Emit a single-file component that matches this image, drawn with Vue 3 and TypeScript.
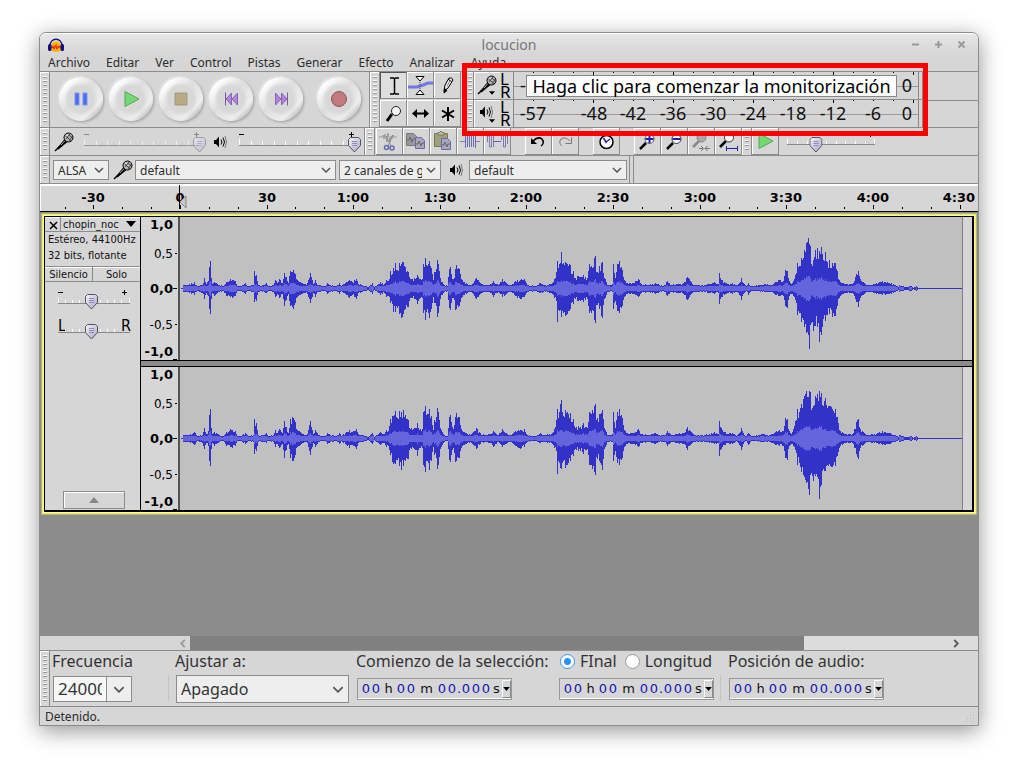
<script setup lang="ts">
import { ref } from 'vue'

const menus = ['Archivo', 'Editar', 'Ver', 'Control', 'Pistas', 'Generar', 'Efecto', 'Analizar', 'Ayuda']

const transport = [
  { id: 'pause', label: 'Pausa' },
  { id: 'play', label: 'Reproducir' },
  { id: 'stop', label: 'Detener' },
  { id: 'start', label: 'Ir al inicio' },
  { id: 'end', label: 'Ir al final' },
  { id: 'record', label: 'Grabar' },
]

const tools = [
  { id: 'ibeam', label: 'Selección' },
  { id: 'envelope', label: 'Envolvente' },
  { id: 'pencil', label: 'Dibujo' },
  { id: 'lens', label: 'Ampliación' },
  { id: 'shift', label: 'Traslado' },
  { id: 'multi', label: 'Multiherramienta' },
]

const editGroups = [
  [
    { id: 'cut', label: 'Cortar' },
    { id: 'copy', label: 'Copiar' },
    { id: 'paste', label: 'Pegar' },
    { id: 'trim', label: 'Recortar' },
    { id: 'silence', label: 'Silenciar' },
  ],
  [
    { id: 'undo', label: 'Deshacer' },
    { id: 'redo', label: 'Rehacer' },
  ],
  [{ id: 'clock', label: 'Sincronizar pistas' }],
  [
    { id: 'zoomin', label: 'Ampliar' },
    { id: 'zoomout', label: 'Reducir' },
    { id: 'fitsel', label: 'Ajustar selección' },
    { id: 'fitproj', label: 'Ajustar proyecto' },
  ],
]

const meters = [
  {
    id: 'mic',
    label: 'Medidor de grabación',
    marks: [
      { t: '-', x: 9 },
      { t: '0', x: 393 },
    ],
  },
  {
    id: 'speaker',
    label: 'Medidor de reproducción',
    marks: [
      { t: '-57', x: 19 },
      { t: '-48', x: 80 },
      { t: '-42', x: 119 },
      { t: '-36', x: 159 },
      { t: '-30', x: 199 },
      { t: '-24', x: 239 },
      { t: '-18', x: 279 },
      { t: '-12', x: 319 },
      { t: '-6', x: 359 },
      { t: '0', x: 393 },
    ],
  },
]
const meterTicks = Array.from({ length: 20 }, (_, k) => 399 - 20 * k)

const timeLabels = ['-30', '0', '30', '1:00', '1:30', '2:00', '2:30', '3:00', '3:30', '4:00', '4:30']
const timeX = (i: number) => Math.round(53.4 + 86.6 * i)
const timeTicks = Array.from({ length: 32 }, (_, k) => ({
  x: Math.round(53.4 + 28.87 * (k - 1)),
  major: (k - 1) % 3 === 0,
}))

const ampLabels = [
  { t: '1,0', y: 12, bold: true },
  { t: '0,5', y: 41, bold: false },
  { t: '0,0', y: 76, bold: true },
  { t: '-0,5', y: 112, bold: false },
  { t: '-1,0', y: 139, bold: true },
]

const recVolume = ref(100)
const playVolume = ref(100)
const speed = ref(34)
const gain = ref(45)
const pan = ref(45)
const range = ref('final')
const rate = ref('24000')

type Cell = { c: string; k: string }
const timeCells: Cell[] = [...'00h00m00.000s'].map((c) => ({
  c,
  k: c === '0' ? 'd' : c === '.' ? 'dot' : c,
}))

// Envelope points: column, peak above the axis, peak below the axis.
type Point = [number, number, number]
const left: Point[] = [
  [2, 0, 0], [3, 3, 3], [8, 3, 3], [14, 6, 6], [17, 2, 2], [22, 3, 4], [24, 10, 10], [26, 4, 4], [28, 7, 7], [29, 21, 20],
  [30, 27, 25], [31, 10, 10], [32, 4, 4], [34, 6, 7], [37, 4, 4], [43, 2, 2], [46, 6, 7], [50, 9, 8], [52, 8, 9], [55, 7, 7],
  [57, 2, 2], [62, 3, 3], [65, 5, 5], [68, 2, 2], [73, 3, 3], [74, 17, 13], [76, 13, 12], [78, 3, 3], [82, 3, 3], [86, 5, 4],
  [88, 2, 2], [93, 3, 3], [95, 8, 8], [97, 5, 5], [99, 9, 9], [102, 5, 5], [104, 15, 17], [106, 11, 11], [108, 5, 5],
  [110, 17, 17], [113, 18, 20], [115, 14, 14], [117, 8, 8], [120, 6, 6], [126, 3, 3], [128, 8, 8], [130, 15, 14], [133, 4, 4],
  [135, 8, 8], [138, 3, 3], [145, 2, 2], [147, 5, 5], [150, 3, 3], [156, 2, 2], [159, 5, 5], [161, 2, 2], [166, 6, 6],
  [169, 8, 9], [172, 6, 6], [176, 9, 10], [178, 4, 4], [182, 3, 3], [188, 1, 1], [192, 5, 5], [194, 1, 1], [200, 6, 6],
  [204, 4, 4], [206, 8, 8], [208, 7, 7], [210, 17, 14], [213, 20, 23], [215, 25, 23], [217, 18, 19], [219, 25, 25],
  [221, 24, 29], [223, 26, 25], [225, 21, 20], [228, 16, 18], [230, 9, 9], [234, 10, 10], [237, 13, 15], [240, 9, 9],
  [242, 9, 9], [243, 24, 24], [245, 30, 31], [247, 22, 20], [249, 27, 29], [251, 20, 20], [253, 8, 8], [254, 16, 14],
  [256, 19, 17], [257, 28, 28], [258, 24, 24], [260, 10, 10], [263, 4, 4], [267, 2, 2], [269, 19, 19], [270, 21, 21],
  [271, 14, 14], [273, 9, 9], [275, 19, 21], [276, 23, 20], [279, 19, 17], [281, 9, 9], [284, 6, 6], [290, 3, 3],
  [296, 10, 10], [300, 5, 5], [304, 3, 3], [311, 4, 4], [313, 7, 8], [318, 3, 3], [322, 9, 8], [326, 5, 5], [330, 3, 3],
  [335, 7, 7], [340, 8, 10], [344, 9, 8], [347, 3, 3], [355, 2, 2], [360, 5, 4], [365, 3, 3], [372, 5, 5], [374, 9, 9],
  [376, 16, 12], [377, 27, 33], [379, 24, 22], [381, 36, 28], [382, 24, 22], [385, 26, 27], [388, 22, 22], [390, 23, 20],
  [392, 14, 14], [394, 17, 15], [396, 10, 10], [399, 12, 12], [401, 11, 12], [404, 13, 13], [408, 10, 10], [410, 24, 24],
  [412, 22, 24], [415, 30, 31], [416, 32, 34], [417, 16, 16], [420, 22, 20], [423, 26, 29], [425, 10, 10], [429, 3, 3],
  [433, 4, 3], [434, 24, 20], [436, 10, 12], [438, 24, 22], [440, 27, 24], [443, 18, 17], [445, 8, 8], [448, 5, 5],
  [454, 5, 5], [459, 9, 8], [462, 4, 4], [469, 3, 3], [476, 5, 5], [480, 3, 3], [485, 3, 3], [488, 7, 7], [492, 3, 3],
  [497, 4, 4], [504, 5, 5], [508, 11, 11], [511, 7, 6], [515, 3, 3], [525, 3, 3], [535, 6, 5], [539, 4, 4], [540, 15, 15],
  [543, 8, 8], [548, 4, 4], [553, 5, 5], [558, 3, 3], [562, 10, 11], [564, 5, 5], [567, 2, 2], [569, 5, 6], [572, 2, 2],
  [585, 4, 3], [590, 3, 3], [596, 6, 6], [600, 8, 7], [604, 7, 7], [606, 18, 17], [608, 17, 19], [610, 7, 7], [612, 4, 5],
  [616, 13, 11], [618, 25, 26], [620, 22, 24], [622, 30, 33], [625, 38, 38], [627, 45, 44], [629, 50, 46], [630, 44, 60],
  [631, 42, 36], [632, 24, 34], [634, 28, 42], [636, 38, 37], [638, 40, 38], [640, 37, 53], [642, 41, 46], [644, 28, 30],
  [646, 36, 32], [648, 26, 26], [650, 28, 25], [653, 25, 28], [656, 25, 27], [658, 17, 17], [660, 8, 9], [664, 5, 5],
  [670, 4, 4], [674, 5, 5], [677, 14, 13], [679, 17, 18], [681, 9, 9], [684, 6, 6], [688, 3, 3], [695, 4, 4], [703, 7, 6],
  [710, 5, 5], [716, 3, 3], [719, 1, 1], [720, 3, 3], [726, 1, 1], [732, 2, 2], [734, 0, 0], [737, 2, 2], [739, 0, 0],
]
const right: Point[] = left.map(([x, u, d]) =>
  x === 629 ? [x, 41, 50] : x === 640 ? [x, 47, 60] : x > 614 && x < 659 ? [x, Math.min(47, u + 4), Math.min(56, d)] : [x, u + (u > 12 ? 2 : 0), d + (d > 12 ? 2 : 0)],
)

function columns(points: Point[], seed: number) {
  let s = seed
  let outer = ''
  let inner = ''
  let i = 0
  for (let x = 2; x < 740; x++) {
    while (i < points.length - 2 && points[i + 1][0] <= x) i++
    const [x0, u0, d0] = points[i]
    const [x1, u1, d1] = points[i + 1]
    const t = Math.min(1, Math.max(0, (x - x0) / (x1 - x0)))
    s = (s * 1103515245 + 12345) % 2147483648
    const j = x === x0 ? 1 : 0.72 + 0.34 * (s / 2147483648)
    const u = Math.round((u0 + (u1 - u0) * t) * j)
    const d = Math.round((d0 + (d1 - d0) * t) * j)
    outer += `M${x} ${71 - u}h1V${72 + d}h-1z`
    const m = Math.min(u, d)
    if (m >= 2) {
      const r = Math.round(1 + m * 0.24)
      inner += `M${x} ${71 - r}h1V${72 + r}h-1z`
    }
  }
  return { outer, inner }
}
const channels = [columns(left, 7), columns(right, 91)]
</script>

<template>
  <div class="page">
    <svg class="defs" aria-hidden="true">
      <defs>
        <linearGradient id="thumb" x1="0" x2="1" y1="0" y2="1">
          <stop offset="0" stop-color="#f4f4fc" />
          <stop offset="1" stop-color="#a4a4cc" />
        </linearGradient>
        <symbol id="i-pause" viewBox="0 0 20 20">
          <path d="M4 4h4v12H4zM12 4h4v12h-4z" fill="#4a6cf0" stroke="#7f95ee" />
        </symbol>
        <symbol id="i-play" viewBox="0 0 20 20">
          <path d="M4 2.500l14 7.500-14 7.500z" fill="#74d874" stroke="#56a856" />
        </symbol>
        <symbol id="i-stop" viewBox="0 0 20 20">
          <path d="M4 4h12v12H4z" fill="#b9aa86" stroke="#a39878" />
        </symbol>
        <symbol id="i-start" viewBox="0 0 20 20">
          <path d="M4.500 3.500v13" stroke="#7a58a0" />
          <path d="M10.500 4v12L5 10zM16.500 4v12L11 10z" fill="#b184dc" stroke="#8a62b4" />
        </symbol>
        <symbol id="i-end" viewBox="0 0 20 20">
          <path d="M16.500 3.500v13" stroke="#7a58a0" />
          <path d="M4.500 4v12L10 10zM10.500 4v12L16 10z" fill="#b184dc" stroke="#8a62b4" />
        </symbol>
        <symbol id="i-record" viewBox="0 0 20 20">
          <circle cx="10" cy="10" r="7.500" fill="#c07c7c" stroke="#965454" />
        </symbol>
        <symbol id="i-ibeam" viewBox="0 0 26 26">
          <path d="M10 6h3.500l1 1 1-1H19M14.500 7v14M10 22h3.500l1-1 1 1H19" fill="none" stroke="#000" stroke-width="1.500" />
        </symbol>
        <symbol id="i-envelope" viewBox="0 0 26 26">
          <path d="M1 15h9l6-2 5-2h5" fill="none" stroke="#7078e4" stroke-width="3" />
          <path d="M9 4.500h8L13 9zM9 22.500h8L13 18z" fill="#fff" stroke="#000" />
          <path d="M13 10v7" stroke="#444" stroke-dasharray="1 1" />
        </symbol>
        <symbol id="i-pencil" viewBox="0 0 26 26">
          <path d="M10 19l1-6 4-7q3-1 4 2l-5 8z" fill="#e8e8e8" stroke="#000" />
          <path d="M10 21l.5-4.500 2.500 2zM14 7l4 3" stroke="#000" fill="#000" />
          <path d="M13 14l3-5" stroke="#888" />
        </symbol>
        <symbol id="i-lens" viewBox="0 0 26 26">
          <path d="M12 14l-5 7" stroke="#000" stroke-width="3" />
          <circle cx="16" cy="11" r="4.500" fill="#f4f4f4" stroke="#222" />
        </symbol>
        <symbol id="i-shift" viewBox="0 0 26 26">
          <path d="M7 13.500h13" stroke="#000" stroke-width="2" />
          <path d="M5 13.500l5-4.500v9zM22 13.500L17 9v9z" />
        </symbol>
        <symbol id="i-multi" viewBox="0 0 26 26">
          <path d="M14 7v14M8 10.500l12 7M20 10.500l-12 7" stroke="#000" stroke-width="2" />
        </symbol>
        <symbol id="i-mic" viewBox="0 0 20 20">
          <path d="M1 19l5-5" stroke="#000" stroke-width="1.500" />
          <path d="M3 16.500l7.500-9.500 3 3-9 7.500z" fill="#000" />
          <path d="M7 13l4-4.500" stroke="#aaa" />
          <circle cx="14.500" cy="5.500" r="4.500" fill="#b4b4b4" stroke="#000" />
          <path d="M11.500 4l6 5M13.500 2l5 4M12 7l4-5M15 9l3.500-5" stroke="#222" stroke-width=".7" />
          <path d="M12.500 4l2-2" stroke="#fff" />
        </symbol>
        <symbol id="i-speaker" viewBox="0 0 14 14">
          <path d="M1 5h2l3-3.500v11L3 9H1z" />
          <path d="M8 4.500q2 2.500 0 5M10 2.500q3 4.500 0 9" fill="none" stroke="#000" />
          <path d="M12 1q3 6 0 12" fill="none" stroke="#777" />
        </symbol>
        <symbol id="i-cut" viewBox="0 0 26 26">
          <path d="M3 9h3l1-2 1 4 1-5 2 8 1-9 2 9 1-6 1 3 1-4 1 2h3" fill="none" stroke="#999" />
          <path d="M10 8l5 10M17 7l-5 11" stroke="#888" />
          <circle cx="10.500" cy="19.500" r="2" fill="none" stroke="#6868b4" stroke-width="1.500" />
          <circle cx="16" cy="20" r="2" fill="none" stroke="#6868b4" stroke-width="1.500" />
        </symbol>
        <symbol id="i-copy" viewBox="0 0 26 26">
          <path d="M3.500 5.500h7l3 3v9h-10z" fill="#999" stroke="#777" />
          <path d="M12.500 9.500h6l3 3v8h-9z" fill="#a8a8b8" stroke="#6868b4" />
          <path d="M4 12h2l1-3 2 5 1-3h2M13 16h2l1-3 2 5 1-3h2" fill="none" stroke="#666" />
        </symbol>
        <symbol id="i-paste" viewBox="0 0 26 26">
          <path d="M4.500 5.500h13v13h-13z" fill="#a0a07c" stroke="#77775c" />
          <path d="M8 7V4.500h2l1-1.500 1 1.500h2V7z" fill="#c8c880" stroke="#777" />
          <path d="M11.500 10.500h6l3 3v8h-9z" fill="#a8a8b8" stroke="#6868b4" />
          <path d="M12 17h2l1-3 2 5 1-3h2" fill="none" stroke="#666" />
        </symbol>
        <symbol id="i-trim" viewBox="0 0 26 26">
          <path d="M3 13.500h5M18 13.500h5" stroke="#8080b0" />
          <path d="M8.500 7v13M18.500 7v13M10.500 19V8M12.500 8v11M14.500 19V8M16.500 8v11" fill="none" stroke="#6c6cb4" />
        </symbol>
        <symbol id="i-silence" viewBox="0 0 26 26">
          <path d="M9 13.500h8" stroke="#5c5cb0" />
          <path d="M3.500 14V8h2v11h2V7h2v12M17.500 12V7h2v12h2V8h2v8" fill="none" stroke="#7c7cb4" />
        </symbol>
        <symbol id="i-undo" viewBox="0 0 26 26">
          <path d="M8 13q5-5 9-2 3 4-1 7" fill="none" stroke="#000" stroke-width="1.500" />
          <path d="M6 10v6h6z" />
        </symbol>
        <symbol id="i-redo" viewBox="0 0 26 26">
          <path d="M18 13q-5-5-9-2-3 4 1 7" fill="none" stroke="#777" />
          <path d="M19.500 9.500v6h-6" fill="none" stroke="#777" />
        </symbol>
        <symbol id="i-clock" viewBox="0 0 26 26">
          <circle cx="13.500" cy="14" r="6.500" fill="#fff" stroke="#000" stroke-width="1.500" />
          <path d="M13.500 15l-3-5M13 14l4-3" stroke="#2020b0" stroke-width="1.500" />
        </symbol>
        <symbol id="i-zoomin" viewBox="0 0 26 26">
          <path d="M12 15l-6 6" stroke="#000" stroke-width="2.500" />
          <circle cx="15.500" cy="11" r="4.500" fill="#fff" stroke="#555" />
          <path d="M15.500 7v8M11.500 11h8" stroke="#2020b0" stroke-width="2" />
        </symbol>
        <symbol id="i-zoomout" viewBox="0 0 26 26">
          <path d="M12 15l-6 6" stroke="#000" stroke-width="2.500" />
          <circle cx="15.500" cy="11" r="4.500" fill="#fff" stroke="#333" />
          <path d="M11.500 11h8" stroke="#2020b0" stroke-width="2" />
        </symbol>
        <symbol id="i-fitsel" viewBox="0 0 26 26">
          <path d="M11 13l-6 6" stroke="#888" stroke-width="2.500" />
          <circle cx="13.500" cy="9.500" r="4.500" fill="#aaa" stroke="#888" />
          <path d="M11 20.500h4M17 20.500h5M13 18l2.500 2.500L13 23M19.500 18L17 20.500l2.500 2.500" fill="none" stroke="#777" />
        </symbol>
        <symbol id="i-fitproj" viewBox="0 0 26 26">
          <path d="M11 13l-6 6" stroke="#000" stroke-width="2.500" />
          <circle cx="14" cy="9.500" r="4.500" fill="#fff" stroke="#333" />
          <path d="M11.500 18v5M22.500 18v5M11 20.500h12" stroke="#2020b0" />
        </symbol>
        <symbol id="i-chev" viewBox="0 0 10 6">
          <path d="M1 1l4 4 4-4" fill="none" stroke="#555" stroke-width="1.500" />
        </symbol>
        <symbol id="i-down" viewBox="0 0 10 6"><path d="M0 0h10L5 6z" /></symbol>
        <symbol id="i-thumb" viewBox="0 0 13 16">
          <path d="M2.500 .5h8l2 2v6l-6 6.500-6-6.500v-6z" fill="url(#thumb)" stroke="#555" />
          <path d="M4 4.500h5M4 6.500h5M4 8.500h5" stroke="#8c8cb4" />
        </symbol>
      </defs>
    </svg>

    <main class="window">
      <header class="titlebar">
        <svg class="logo" viewBox="0 0 16 14">
          <path d="M3 8a5 4.500 0 0 1 10 0v3a5 3 0 0 1-10 0z" fill="#ffb400" />
          <path d="M3 9.500l2-1 1 2 2-3 1 3 2-2 2 1" fill="none" stroke="#e83800" stroke-width="1.500" />
          <path d="M2 8C2-1 14-1 14 8" fill="none" stroke="#10107c" stroke-width="1.500" />
          <rect x="0" y="6" width="3.500" height="7" rx="1.500" fill="#10108c" />
          <rect x="12.500" y="6" width="3.500" height="7" rx="1.500" fill="#10108c" />
        </svg>
        <h1>locucion</h1>
        <div class="wm">
          <button aria-label="Minimizar"><svg viewBox="0 0 9 9"><path d="M1 4.500h7" /></svg></button>
          <button aria-label="Maximizar"><svg viewBox="0 0 9 9"><path d="M1 4.500h7M4.500 1v7" /></svg></button>
          <button aria-label="Cerrar"><svg viewBox="0 0 9 9"><path d="M1.500 1.500l6 6M7.500 1.500l-6 6" /></svg></button>
        </div>
      </header>
      <nav class="menubar">
        <button v-for="m in menus" :key="m">{{ m }}</button>
      </nav>

      <section class="row row1">
        <i class="grip" />
        <div class="transport">
          <button v-for="b in transport" :key="b.id" :class="b.id" :aria-label="b.label">
            <svg><use :href="'#i-' + b.id" /></svg>
          </button>
        </div>
        <i class="grip" />
        <div class="tools">
          <button v-for="(t, i) in tools" :key="t.id" class="cell" :class="{ on: i === 0 }" :aria-label="t.label">
            <svg><use :href="'#i-' + t.id" /></svg>
          </button>
        </div>
        <div class="meters">
          <div v-for="m in meters" :key="m.id" class="meter">
            <i class="grip" />
            <button class="mbtn" :aria-label="m.label">
              <svg :class="m.id"><use :href="'#i-' + m.id" /></svg>
              <svg class="tri"><use href="#i-down" /></svg>
            </button>
            <div class="lr"><span>L</span><span>R</span></div>
            <svg class="scale">
              <path d="M0 14.500h405" stroke="#999" />
              <path v-for="(x, k) in meterTicks" :key="x" :d="`M${x}.5 0v${k % 4 === 0 ? 3 : 1}`" stroke="#000" />
              <text v-for="l in m.marks" :key="l.t" :x="l.x" y="20">{{ l.t }}</text>
            </svg>
            <i class="mend" />
          </div>
          <div class="tip" role="tooltip">Haga clic para comenzar la monitorización</div>
          <div class="highlight" />
        </div>
      </section>

      <section class="row row2">
        <i class="grip" />
        <div class="mixer">
          <svg class="mic"><use href="#i-mic" /></svg>
          <label class="slider off">
            <svg viewBox="0 0 122 26">
              <path d="M0 5.500h5M110 5.500h5M112.500 3v5" stroke="#888" />
              <path d="M.5 10v6M12.500 12v4M23.500 12v4M35.500 12v4M46.500 12v4M58.500 12v4M69.500 12v4M81.500 12v4M92.500 12v4M104.500 12v4" stroke="#eee" />
              <path d="M0 16.500h114" stroke="#999" />
              <use href="#i-thumb" :x="recVolume * 1.09" y="8" width="13" height="16" />
            </svg>
            <input v-model.number="recVolume" type="range" aria-label="Volumen de grabación" />
          </label>
          <svg class="speaker"><use href="#i-speaker" /></svg>
          <label class="slider">
            <svg viewBox="0 0 122 26">
              <path d="M0 5.500h5M110 5.500h5M112.500 3v5" stroke="#000" />
              <path d="M.5 10v6M12.500 12v4M23.500 12v4M35.500 12v4M46.500 12v4M58.500 12v4M69.500 12v4M81.500 12v4M92.500 12v4M104.500 12v4" stroke="#fff" />
              <path d="M0 16.500h114" stroke="#888" />
              <use href="#i-thumb" :x="playVolume * 1.09" y="8" width="13" height="16" />
            </svg>
            <input v-model.number="playVolume" type="range" aria-label="Volumen de reproducción" />
          </label>
        </div>
        <i class="grip" />
        <div class="edit">
          <div v-for="(g, i) in editGroups" :key="i" class="group">
            <button v-for="b in g" :key="b.id" class="cell" :aria-label="b.label">
              <svg><use :href="'#i-' + b.id" /></svg>
            </button>
          </div>
        </div>
        <i class="grip" />
        <button class="cell playat" aria-label="Reproducir a velocidad"><svg><use href="#i-play" /></svg></button>
        <label class="slider speed">
          <svg viewBox="0 0 122 26">
            <path d="M.5 11v5M10.500 13v3M20.500 13v3M29.500 13v3M39.500 13v3M49.500 13v3M58.500 13v3M68.500 13v3M78.500 13v3M87.500 11v5" stroke="#fff" />
            <path d="M0 16.500h88" stroke="#888" />
            <path d="M83.500 7v2" stroke="#000" />
            <use href="#i-thumb" :x="speed * 0.66" y="9" width="13" height="16" />
          </svg>
          <input v-model.number="speed" type="range" aria-label="Velocidad de reproducción" />
        </label>
      </section>

      <section class="row row3">
        <i class="grip" />
        <div class="devices">
          <span class="pick host">
            <select aria-label="Servidor de audio"><option>ALSA</option></select>
            <svg><use href="#i-chev" /></svg>
          </span>
          <svg class="mic"><use href="#i-mic" /></svg>
          <span class="pick indev">
            <select aria-label="Dispositivo de grabación"><option>default</option></select>
            <svg><use href="#i-chev" /></svg>
          </span>
          <span class="pick chan">
            <select aria-label="Canales de grabación"><option>2 canales de grabación</option></select>
            <svg><use href="#i-chev" /></svg>
          </span>
          <svg class="speaker"><use href="#i-speaker" /></svg>
          <span class="pick outdev">
            <select aria-label="Dispositivo de reproducción"><option>default</option></select>
            <svg><use href="#i-chev" /></svg>
          </span>
        </div>
      </section>

      <svg class="timeline">
        <text v-for="(l, i) in timeLabels" :key="l" :x="timeX(i)" y="18">{{ l }}</text>
        <path v-for="t in timeTicks" :key="t.x" :d="`M${t.x}.5 ${t.major ? 21 : 23}V25`" stroke="#000" />
        <path d="M139.500 1v24" stroke="#000" />
        <path d="M140 18l6-6v12z" fill="#c8c8c8" stroke="#888" />
      </svg>

      <section class="workspace">
        <article class="track">
          <div class="panel">
            <div class="head">
              <button class="close" aria-label="Cerrar pista">
                <svg viewBox="0 0 9 9"><path d="M1 1l7 7M8 1L1 8" stroke="#000" stroke-width="1.500" /></svg>
              </button>
              <button class="name">chopin_noc <svg><use href="#i-down" /></svg></button>
            </div>
            <p>Estéreo, 44100Hz<br />32 bits, flotante</p>
            <div class="ms"><button>Silencio</button><button>Solo</button></div>
            <label class="tslider">
              <svg viewBox="0 0 76 26">
                <path d="M0 5.500h5M64 5.500h5M66.500 3v5" stroke="#000" />
                <path d="M.5 11v5M7.500 13v3M14.500 13v3M21.500 13v3M42.500 13v3M49.500 13v3M56.500 13v3M63.500 13v3M71.500 11v5" stroke="#fff" />
                <path d="M0 16.500h72" stroke="#888" />
                <use href="#i-thumb" :x="gain * 0.6" y="7" width="13" height="16" />
              </svg>
              <input v-model.number="gain" type="range" aria-label="Ganancia" />
            </label>
            <label class="tslider pan">
              <svg viewBox="0 0 76 26">
                <text x="0" y="15">L</text>
                <text x="63" y="15">R</text>
                <path d="M7.500 13v3M14.500 13v3M21.500 13v3M42.500 13v3M49.500 13v3M56.500 13v3" stroke="#fff" />
                <path d="M0 16.500h72" stroke="#888" />
                <use href="#i-thumb" :x="pan * 0.6" y="8" width="13" height="16" />
              </svg>
              <input v-model.number="pan" type="range" aria-label="Panorama" />
            </label>
            <button class="collapse" aria-label="Contraer pista">
              <svg viewBox="0 0 10 6"><path d="M0 6h10L5 0z" fill="#888" /></svg>
            </button>
          </div>
          <div class="channels">
            <div v-for="(c, i) in channels" :key="i" class="channel">
              <svg class="vruler">
                <text v-for="a in ampLabels" :key="a.t" :class="{ b: a.bold }" x="32" :y="a.y">{{ a.t }}</text>
                <path d="M34 36.500h2M32 71.500h4M34 107.500h2M32 142.500h4" stroke="#000" />
              </svg>
              <svg class="wave" viewBox="0 0 783 143" preserveAspectRatio="none" shape-rendering="crispEdges">
                <path d="M1 71h782v1H1z" fill="#3232c8" />
                <path :d="c.outer" fill="#3232c8" />
                <path :d="c.inner" fill="#6464dc" />
              </svg>
              <i class="tail" />
            </div>
          </div>
        </article>
      </section>

      <div class="scroll">
        <button class="sleft" aria-label="Desplazar a la izquierda"><svg viewBox="0 0 6 10"><path d="M5 1L1 5l4 4" /></svg></button>
        <i class="sthumb" />
        <button class="sright" aria-label="Desplazar a la derecha"><svg viewBox="0 0 6 10"><path d="M1 1l4 4-4 4" /></svg></button>
      </div>

      <section class="selbar">
        <i class="grip" />
        <div class="field freq">
          <label for="rate">Frecuencia</label>
          <div class="combo">
            <input id="rate" v-model="rate" type="text" />
            <button aria-label="Elegir frecuencia"><svg><use href="#i-chev" /></svg></button>
          </div>
        </div>
        <div class="field snap">
          <label for="snap">Ajustar a:</label>
          <span class="pick">
            <select id="snap"><option>Apagado</option></select>
            <svg><use href="#i-chev" /></svg>
          </span>
        </div>
        <div class="field from">
          <span class="lbl">Comienzo de la selección:</span>
          <div class="time">
            <span v-for="(c, i) in timeCells" :key="i" :class="c.k">{{ c.c }}</span>
            <button aria-label="Formato de comienzo"><svg><use href="#i-down" /></svg></button>
          </div>
        </div>
        <div class="field to">
          <div class="radios">
            <label><input v-model="range" type="radio" name="range" value="final" />FInal</label>
            <label><input v-model="range" type="radio" name="range" value="longitud" />Longitud</label>
          </div>
          <div class="time">
            <span v-for="(c, i) in timeCells" :key="i" :class="c.k">{{ c.c }}</span>
            <button aria-label="Formato de final"><svg><use href="#i-down" /></svg></button>
          </div>
        </div>
        <div class="field pos">
          <span class="lbl">Posición de audio:</span>
          <div class="time">
            <span v-for="(c, i) in timeCells" :key="i" :class="c.k">{{ c.c }}</span>
            <button aria-label="Formato de posición"><svg><use href="#i-down" /></svg></button>
          </div>
        </div>
      </section>

      <footer class="status">
        <span>Detenido.</span>
        <svg viewBox="0 0 12 12">
          <path d="M10 0h1v1h-1zM10 3h1v1h-1zM7 3h1v1H7zM10 6h1v1h-1zM7 6h1v1H7zM4 6h1v1H4zM10 9h1v1h-1zM7 9h1v1H7zM4 9h1v1H4zM1 9h1v1H1z" fill="#bbb" />
        </svg>
      </footer>
    </main>
  </div>
</template>

<style>
html,
body {
  height: 100%;
  background: #fff;
}
#app {
  height: 100%;
}
</style>

<style scoped>
* {
  box-sizing: border-box;
}
.page {
  min-height: 100%;
  padding: 32px 42px 41px 39px;
  display: flex;
  overflow: hidden;
  font-family: 'Noto Sans', 'Open Sans', sans-serif;
  font-size: 12px;
  color: #2d2d2d;
}
.defs {
  position: absolute;
  width: 0;
  height: 0;
}
svg {
  display: block;
  flex: none;
}
button,
input,
select {
  font: inherit;
  color: inherit;
  margin: 0;
  padding: 0;
  border: 0;
  background: none;
  border-radius: 0;
}
.window {
  flex: 1;
  min-width: 0;
  display: flex;
  flex-direction: column;
  background: #d6d6d6;
  border: 1px solid #8c8c8c;
  border-radius: 7px 7px 0 0;
  box-shadow: 0 5px 22px rgba(0, 0, 0, 0.42);
}
.titlebar {
  height: 22px;
  flex: none;
  display: grid;
  grid-template-columns: 1fr auto 1fr;
  align-items: center;
  padding: 0 8px;
  background: linear-gradient(#e6e6e6, #d6d6d6);
  border-top: 1px solid #fff;
  border-radius: 6px 6px 0 0;
}
.logo {
  width: 16px;
  height: 14px;
}
h1 {
  margin: 0;
  font: 14px/18px 'Noto Sans', sans-serif;
  color: #777;
}
.wm {
  display: flex;
  gap: 14px;
  justify-self: end;
  padding-right: 4px;
}
.wm svg {
  width: 9px;
  height: 9px;
  stroke: #999;
  stroke-width: 2;
}
.menubar {
  height: 16px;
  flex: none;
  display: flex;
  gap: 16px;
  padding-left: 8px;
  line-height: 16px;
}
.row {
  flex: none;
  display: flex;
  border-top: 1px solid #8c8c8c;
}
.row1 {
  height: 56px;
}
.row2,
.row3 {
  height: 28px;
}
.grip {
  flex: none;
  width: 10px;
  border: solid #8c8c8c;
  border-width: 0 1px 0 0;
  box-shadow: inset 1px 1px #fff;
  background: repeating-linear-gradient(#fff 0 1px, #999 1px 2px, #d6d6d6 2px 4px) 3px 4px / 4px calc(100% - 8px) no-repeat;
}
.transport {
  width: 320px;
  display: flex;
  padding: 5px 5px 0 6px;
  border-right: 1px solid #8c8c8c;
}
.transport button {
  width: 44px;
  height: 44px;
  margin: 0 3px;
  border-radius: 50%;
  display: grid;
  place-items: center;
  background: radial-gradient(circle at 50% 50%, #d8d8d8 0 13px, transparent 17px), linear-gradient(135deg, #fff 15%, #ddd 45%, #eee 75%, #aaa 92%);
  box-shadow: 1px 1px 3px #999, -1px -1px 2px #eee;
}
.transport .record {
  margin-left: 11px;
}
.transport svg {
  width: 20px;
  height: 20px;
}
.tools {
  width: 83px;
  display: grid;
  grid-template-columns: repeat(3, 27px);
  grid-auto-rows: 27px;
  row-gap: 1px;
}
.cell {
  width: 27px;
  height: 27px;
  border: solid #8c8c8c;
  border-width: 0 1px 1px 0;
  box-shadow: inset 1px 1px #fff;
}
.cell svg {
  width: 26px;
  height: 26px;
}
.cell.on {
  background: #dedede;
  box-shadow: inset 1px 1px #555;
}
.meters {
  position: relative;
  flex: none;
  width: 460px;
  margin-left: 2px;
}
.meter {
  display: flex;
  height: 28px;
  border-bottom: 1px solid #8c8c8c;
}
.meter .grip {
  width: 9px;
}
.row1::after {
  content: '';
  flex: 1;
  height: 28px;
  border-bottom: 1px solid #8c8c8c;
}
.mbtn {
  width: 26px;
  position: relative;
  box-shadow: inset 1px 1px #fff;
}
.mic {
  width: 20px;
  height: 20px;
}
.speaker {
  width: 14px;
  height: 14px;
}
.mbtn .mic {
  margin: 0 0 2px 3px;
}
.mbtn .speaker {
  margin: 0 0 4px 5px;
}
.mbtn .tri {
  position: absolute;
  right: 5px;
  bottom: 4px;
  width: 6px;
  height: 4px;
}
.lr {
  width: 13px;
  font: 17px/13px 'Noto Sans', sans-serif;
  color: #000;
}
.lr span {
  display: block;
}
.scale {
  width: 405px;
  height: 27px;
  border-left: 1px solid #888;
}
.scale text {
  font: 18px 'Noto Sans', sans-serif;
  text-anchor: middle;
  fill: #111;
}
.mend {
  width: 5px;
  border: solid #888;
  border-width: 0 1px;
}
.tip {
  position: absolute;
  left: 61px;
  top: 3px;
  width: 371px;
  height: 22px;
  border: 1px solid #888;
  background: #fff;
  color: #000;
  font: 18px/20px 'Noto Sans', sans-serif;
  text-align: center;
  white-space: nowrap;
}
.highlight {
  position: absolute;
  inset: -9px -3px -9px -3px;
  border: 5px solid #f00;
  pointer-events: none;
  z-index: 2;
}
.mixer {
  width: 315px;
  display: flex;
  align-items: center;
  padding-left: 4px;
  border-right: 1px solid #8c8c8c;
}
.slider {
  position: relative;
  width: 122px;
  height: 26px;
  margin: 0 7px 0 10px;
}
.slider svg {
  width: 122px;
  height: 26px;
}
.slider input,
.tslider input {
  position: absolute;
  inset: 0;
  width: 100%;
  height: 100%;
  opacity: 0;
}
.off use {
  opacity: 0.45;
}
.mixer .speaker + .slider {
  margin: 0 0 0 12px;
}
.edit {
  display: flex;
  gap: 14px;
  padding-left: 1px;
}
.group {
  display: flex;
}
.playat svg {
  width: 20px;
  height: 20px;
  margin: 0 3px;
}
.speed {
  margin-left: 8px;
}
.devices {
  display: flex;
  align-items: center;
  width: 580px;
  padding-left: 3px;
  border-right: 1px solid #8c8c8c;
  box-shadow: 3px 0 #d6d6d6, 4px 0 #8c8c8c;
}
.pick {
  position: relative;
  display: block;
}
.pick select {
  appearance: none;
  display: block;
  width: 100%;
  height: 20px;
  padding: 1px 18px 0 4px;
  border: 1px solid #8c8c8c;
  background: #eee;
  text-overflow: clip;
}
.pick svg {
  position: absolute;
  right: 5px;
  top: 7px;
  width: 10px;
  height: 6px;
  pointer-events: none;
}
.host {
  width: 56px;
  margin-right: 4px;
}
.indev {
  width: 201px;
  margin-left: 2px;
}
.chan {
  width: 102px;
  margin: 0 8px 0 3px;
}
.outdev {
  width: 158px;
  margin-left: 6px;
}
.timeline {
  width: 100%;
  height: 29px;
  flex: none;
  border-top: 1px solid #8c8c8c;
  border-bottom: 1px solid #000;
  box-shadow: inset 1px 2px #fff;
  overflow: hidden;
}
.timeline text {
  font: bold 13px 'DejaVu Sans', sans-serif;
  text-anchor: middle;
  fill: #000;
}
.workspace {
  flex: 1;
  background: #8c8c8c;
  padding: 1px 1px 0 1px;
}
.track {
  display: flex;
  border: solid #000;
  border-width: 1px 2px 2px 1px;
  margin: 3px;
  box-shadow: 0 0 0 1px #ffff80, 0 0 0 2px #e8e880, 0 0 0 3px #b4b478;
  background: #d6d6d6;
}
.panel {
  width: 96px;
  flex: none;
  display: flex;
  flex-direction: column;
  border-right: 1px solid #000;
  font: 11px/16px 'DejaVu Sans Condensed', 'DejaVu Sans', sans-serif;
  color: #111;
}
.head,
.ms {
  display: flex;
  height: 15px;
  border-bottom: 1px solid #8c8c8c;
  box-shadow: inset 0 1px #fff;
}
.head button,
.ms button {
  line-height: 13px;
}
.close {
  width: 16px;
  padding: 2px 4px 0;
  border-right: 1px solid #888;
}
.close svg {
  width: 9px;
  height: 9px;
}
.name {
  flex: 1;
  display: flex;
  align-items: center;
  justify-content: space-between;
  padding: 0 4px 0 2px;
  white-space: nowrap;
}
.name svg {
  width: 10px;
  height: 6px;
}
.panel p {
  margin: 0;
  height: 34px;
  padding-left: 3px;
  white-space: nowrap;
}
.ms {
  height: 16px;
  border-top: 1px solid #8c8c8c;
}
.ms button {
  flex: 1;
}
.ms button + button {
  border-left: 1px solid #888;
}
.tslider {
  position: relative;
  height: 26px;
  margin: 5px 0 0 13px;
}
.tslider svg {
  width: 76px;
  height: 26px;
}
.tslider text {
  font: 16px 'DejaVu Sans Condensed', 'DejaVu Sans', sans-serif;
}
.tslider.pan {
  margin-top: 3px;
}
.collapse {
  width: 62px;
  height: 18px;
  margin: auto 0 1px 18px;
  border: 1px solid #8c8c8c;
  box-shadow: inset 1px 1px #fff;
  display: grid;
  place-items: center;
}
.collapse svg {
  width: 10px;
  height: 6px;
}
.channels {
  flex: 1;
  min-width: 0;
}
.channel {
  display: flex;
  height: 143px;
}
.channel + .channel {
  border-top: 1px solid #000;
  height: 144px;
  margin-top: 6px;
  position: relative;
  box-shadow: 0 -5px #8c8c8c, 0 -6px #000;
}
.vruler {
  width: 39px;
  height: 143px;
  border-right: 2px solid #555;
}
.vruler text {
  font: 12px 'DejaVu Sans', sans-serif;
  text-anchor: end;
}
.vruler .b {
  font-weight: bold;
  font-size: 13px;
}
.wave {
  flex: 1;
  min-width: 0;
  height: 143px;
  background: #c0c0c0;
}
.tail {
  width: 10px;
  border-left: 1px solid #808080;
}
.scroll {
  height: 15px;
  flex: none;
  display: grid;
  grid-template-columns: 150px minmax(0, 614fr) minmax(0, 174fr);
  background: #dcdcdc;
  border-bottom: 1px solid #8c8c8c;
}
.scroll svg {
  width: 6px;
  height: 9px;
  fill: none;
  stroke: #999;
  stroke-width: 2;
}
.sleft {
  padding-left: 140px;
  background: #d6d6d6;
}
.sthumb {
  background: #808080;
}
.sright {
  padding-right: 19px;
}
.sright svg {
  margin-left: auto;
  stroke: #555;
}
.selbar {
  height: 55px;
  flex: none;
  display: flex;
  font-size: 16px;
  color: #333;
}
.field {
  display: flex;
  flex-direction: column;
  line-height: 20px;
  white-space: nowrap;
}
.freq {
  width: 119px;
  padding-left: 2px;
  background: linear-gradient(#c4c4c4, #c4c4c4) 118px 24px / 1px 26px no-repeat;
}
.combo {
  width: 79px;
  height: 26px;
  margin: 5px 0 0 1px;
  display: flex;
  border: 1px solid #8c8c8c;
}
.combo input {
  width: 52px;
  border: solid #f7f7f7;
  border-width: 0 4px;
  background: #f7f7f7;
  font-size: 17px;
}
.combo button {
  flex: 1;
  border-left: 1px solid #8c8c8c;
  background: #eee;
  display: grid;
  place-items: center;
}
.combo svg,
.snap .pick svg {
  width: 12px;
  height: 7px;
}
.snap {
  width: 187px;
  padding-left: 6px;
}
.snap .pick {
  width: 173px;
  margin: 4px 0 0 1px;
}
.snap select {
  height: 28px;
  padding: 0 24px 0 4px;
}
.snap .pick svg {
  top: 11px;
}
.from {
  width: 202px;
}
.to {
  width: 163px;
  background: linear-gradient(#c4c4c4, #c4c4c4) 162px 24px / 1px 26px no-repeat;
}
.pos {
  padding-left: 7px;
}
.radios {
  display: flex;
  gap: 8px;
  padding-left: 2px;
}
.radios label {
  display: flex;
  align-items: center;
  gap: 5px;
}
.radios input {
  appearance: none;
  width: 15px;
  height: 15px;
  border: 1px solid #999;
  border-radius: 50%;
  background: #fff;
}
.radios input:checked {
  border-color: #3a98f8;
  background: radial-gradient(circle, #2a90f8 0 3px, #fff 4px);
}
.time {
  width: 155px;
  height: 22px;
  margin: 7px 0 0 1px;
  padding-left: 3px;
  display: flex;
  border: 1px solid #999;
  box-shadow: inset -1px -1px #fff;
  font: 13px/20px 'DejaVu Sans', sans-serif;
  color: #111;
}
.time span {
  text-align: center;
}
.time .d,
.time .dot {
  width: 10px;
  color: #1414b4;
}
.time .dot {
  width: 4px;
}
.time .h {
  width: 15px;
}
.time .m {
  width: 21px;
}
.time .s {
  width: 11px;
}
.time button {
  width: 9px;
  margin-top: 1px;
  height: 18px;
  border: 1px solid #888;
  border-color: #fff #888 #888 #fff;
  display: grid;
  place-items: center;
}
.time svg {
  width: 7px;
  height: 4px;
}
.status {
  height: 19px;
  flex: none;
  display: flex;
  justify-content: space-between;
  padding: 0 3px 0 5px;
  border-top: 1px solid #8c8c8c;
  line-height: 19px;
}
.status svg {
  width: 12px;
  height: 12px;
  margin-top: 5px;
}
</style>
